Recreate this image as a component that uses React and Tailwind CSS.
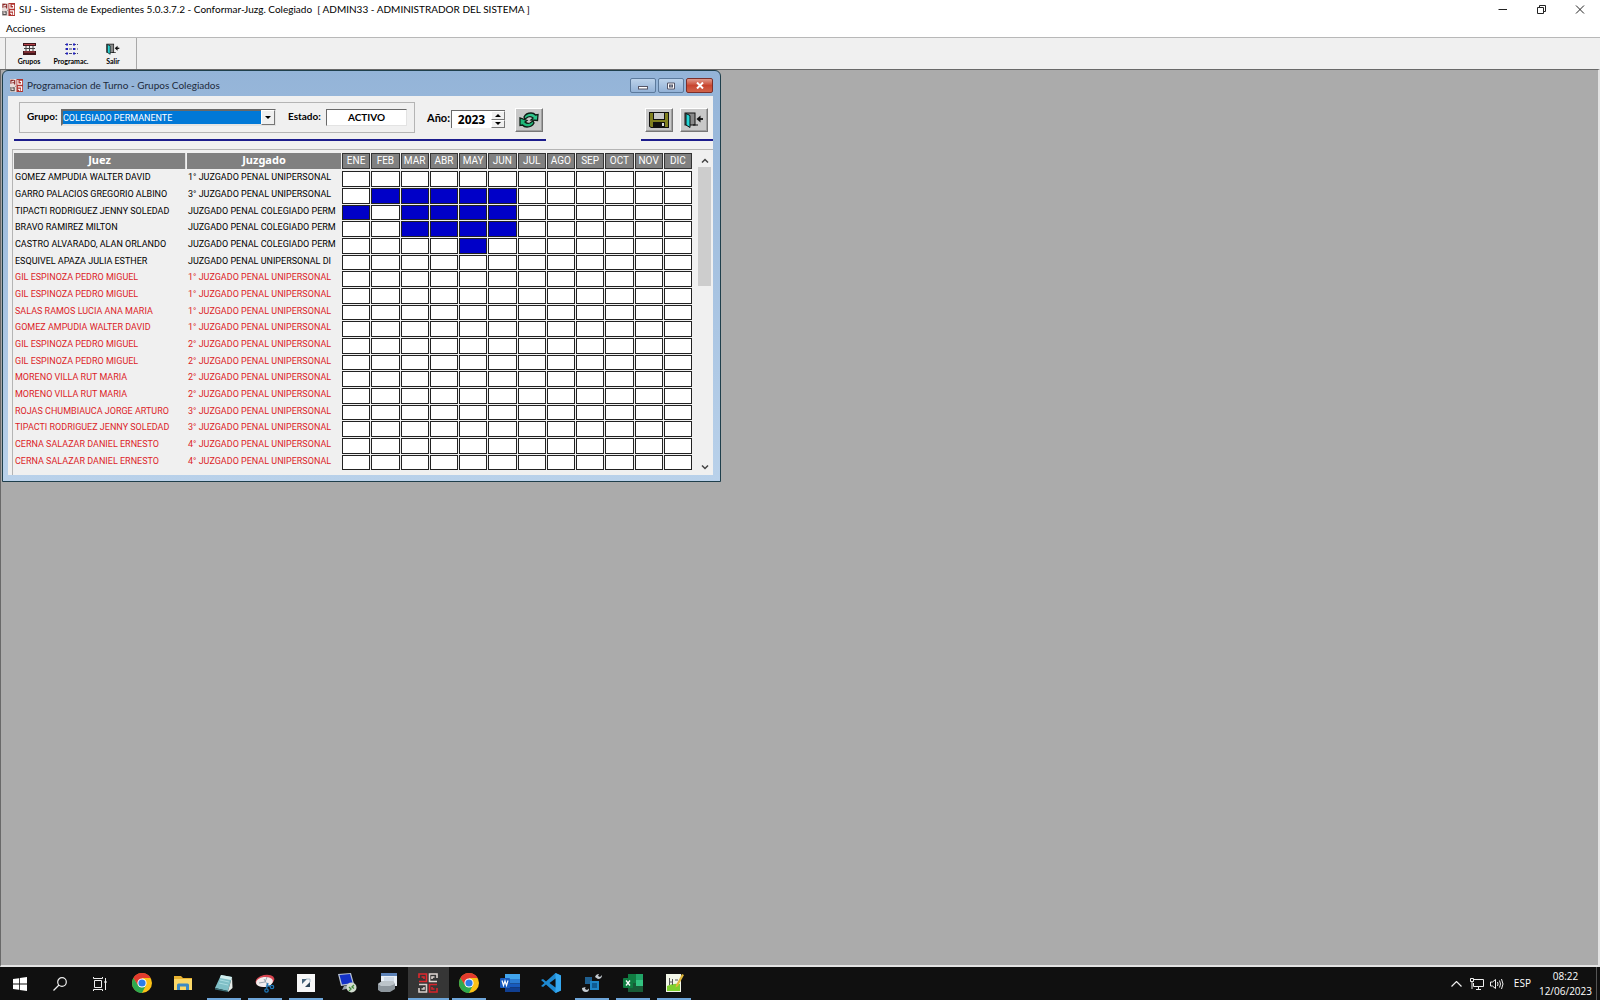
const MONTHS = ['ENE', 'FEB', 'MAR', 'ABR', 'MAY', 'JUN', 'JUL', 'AGO', 'SEP', 'OCT', 'NOV', 'DIC'];
const UNI = ' JUZGADO PENAL UNIPERSONAL';
const ROWS = [
  ['GOMEZ AMPUDIA WALTER DAVID', '1°' + UNI, []],
  ['GARRO PALACIOS GREGORIO ALBINO', '3°' + UNI, [1, 2, 3, 4, 5]],
  ['TIPACTI RODRIGUEZ JENNY SOLEDAD', 'JUZGADO PENAL COLEGIADO PERM', [0, 2, 3, 4, 5]],
  ['BRAVO RAMIREZ MILTON', 'JUZGADO PENAL COLEGIADO PERM', [2, 3, 4, 5]],
  ['CASTRO ALVARADO, ALAN ORLANDO', 'JUZGADO PENAL COLEGIADO PERM', [4]],
  ['ESQUIVEL APAZA JULIA ESTHER', 'JUZGADO PENAL UNIPERSONAL DI', []],
  ['GIL ESPINOZA PEDRO MIGUEL', '1°' + UNI, []],
  ['GIL ESPINOZA PEDRO MIGUEL', '1°' + UNI, []],
  ['SALAS RAMOS LUCIA ANA MARIA', '1°' + UNI, []],
  ['GOMEZ AMPUDIA WALTER DAVID', '1°' + UNI, []],
  ['GIL ESPINOZA PEDRO MIGUEL', '2°' + UNI, []],
  ['GIL ESPINOZA PEDRO MIGUEL', '2°' + UNI, []],
  ['MORENO VILLA RUT MARIA', '2°' + UNI, []],
  ['MORENO VILLA RUT MARIA', '2°' + UNI, []],
  ['ROJAS CHUMBIAUCA JORGE ARTURO', '3°' + UNI, []],
  ['TIPACTI RODRIGUEZ JENNY SOLEDAD', '3°' + UNI, []],
  ['CERNA SALAZAR DANIEL ERNESTO', '4°' + UNI, []],
  ['CERNA SALAZAR DANIEL ERNESTO', '4°' + UNI, []],
];

function SijIcon({ className }) {
  return (
    <svg viewBox="0 0 14 14" className={className}>
      <rect width="14" height="14" fill="#e9dcda" />
      <rect x="7" y="0" width="7" height="14" fill="#b03530" />
      <path d="M1 5V1.500H4M2.500 4H5V1M5 4V6" stroke="#8c2a2a" strokeWidth="1.200" fill="none" />
      <path d="M1 8.500V12.500H4.500V9.500H2.500M5.500 8H6" stroke="#555" strokeWidth="1.200" fill="none" />
      <path d="M8.500 1V5.500H12.500V2.500H10.500M8.500 8.500H12.500V13M8.500 11H10.500V13" stroke="#fff" strokeWidth="1.200" fill="none" />
    </svg>
  );
}

function SijTaskIcon() {
  const arm = 'M1 5V1H8.500V8.500H1M3.500 4H6V6';
  return (
    <svg viewBox="0 0 20 20" className="size-5" strokeWidth="1.600" fill="none">
      <path d={arm} stroke="#e0282e" />
      <path d={arm} stroke="#e0d6d2" transform="translate(20 0) scale(-1 1)" />
      <path d={arm} stroke="#d8cfcb" transform="translate(0 20) scale(1 -1)" />
      <path d={arm} stroke="#d6232b" transform="translate(20 20) scale(-1 -1)" />
    </svg>
  );
}

function DoorIcon({ className }) {
  return (
    <svg viewBox="0 0 20 16" className={className}>
      <rect x="1" y="1" width="10" height="12" fill="#8a8a8a" stroke="#111" />
      <path d="M2 1.500L6 3.500V15.500L2 13Z" fill="#25d5d5" stroke="#111" />
      <path d="M9 13H14" stroke="#111" />
      <path d="M14 7H19" stroke="#111" strokeWidth="1.800" />
      <path d="M12.500 7L16.500 3.500V10.500Z" fill="#111" />
    </svg>
  );
}

function ChromeIcon() {
  return (
    <svg viewBox="0 0 20 20" className="size-5">
      <circle cx="10" cy="10" r="10" fill="#fbc116" />
      <path d="M10 10L1.340 5A10 10 0 0 1 18.660 5H10Z" fill="#e33b2e" />
      <path d="M1.340 5L5.700 12.500L10 10L10 5Z" fill="#e33b2e" />
      <path d="M1.340 5A10 10 0 0 0 10 20L13.900 12.300L10 14.300A4.600 4.600 0 0 1 5.900 12.200Z" fill="#2da94f" />
      <circle cx="10" cy="10" r="4.600" fill="#fff" />
      <circle cx="10" cy="10" r="3.600" fill="#2b7de9" />
    </svg>
  );
}

const TASKS = [
  { name: 'Google Chrome', icon: <ChromeIcon /> },
  {
    name: 'Explorador de archivos',
    icon: (
      <svg viewBox="0 0 20 20" className="size-5">
        <path d="M1 3H8L10 5H19V17H1Z" fill="#e8b230" />
        <path d="M1 6H19V17H1Z" fill="#fbd868" />
        <path d="M4 17V12Q4 10.500 5.500 10.500H14.500Q16 10.500 16 12V17H13V13.500H7V17Z" fill="#3c8ac4" />
      </svg>
    ),
  },
  {
    name: 'Bloc de notas', open: true,
    icon: (
      <svg viewBox="0 0 20 20" className="size-5">
        <path d="M7 2L18 4L14 18L1 15Z" fill="#7fbfc6" />
        <path d="M7 2L18 4L17 7L6 5Z" fill="#d3eeee" />
        <path d="M18 4L18.500 15L14 19L14 18Z" fill="#e4ebe8" />
        <path d="M1 15L14 18V19L1 16.500Z" fill="#3b6f78" />
        <path d="M6 7L15 9M5 10L14 12" stroke="#a9dbe0" strokeWidth="1" />
      </svg>
    ),
  },
  {
    name: 'Recortes', open: true,
    icon: (
      <svg viewBox="0 0 20 20" className="size-5">
        <ellipse cx="10" cy="7.500" rx="9.500" ry="5.500" fill="#d64550" transform="rotate(-12 10 7.500)" />
        <ellipse cx="9.500" cy="9" rx="8.500" ry="5" fill="#f4eeee" transform="rotate(-8 9.500 9)" />
        <path d="M4 10L10 9L12 4M9 6L13 13" stroke="#9aa6b0" strokeWidth="1" fill="none" />
        <circle cx="11.500" cy="17.500" r="1.700" fill="none" stroke="#1f78b8" strokeWidth="1.300" />
        <circle cx="17" cy="14" r="1.700" fill="none" stroke="#1f78b8" strokeWidth="1.300" />
        <path d="M11.500 15.500L13 10M15 13.500L11 12" stroke="#1f78b8" strokeWidth="1.300" />
      </svg>
    ),
  },
  {
    name: 'Escritorio remoto', open: true,
    icon: (
      <svg viewBox="0 0 20 20" className="size-5">
        <rect x="1" y="1" width="18" height="18" fill="#f7f7f7" />
        <path d="M6 6H11L6 11Z" fill="#47657c" />
        <path d="M14 14H9L14 9Z" fill="#2c4356" />
        <path d="M10 6H14V9" stroke="#a8bdcb" fill="none" />
      </svg>
    ),
  },
  {
    name: 'Conexión a escritorio remoto',
    icon: (
      <svg viewBox="0 0 20 20" className="size-5">
        <path d="M1 1L14 0L17 11L4 13Z" fill="#b7c3d4" />
        <path d="M2.500 2L13 1L15.500 10L5 11.500Z" fill="#1432c8" />
        <path d="M7 13L12 12L13 15L5 17Z" fill="#98a3ab" />
        <circle cx="14.500" cy="14.500" r="5" fill="#d2dccf" />
        <path d="M12 14L14 16L12 18M17 12L15 14L17 15.500" stroke="#438b3c" strokeWidth="1.300" fill="none" />
      </svg>
    ),
  },
  {
    name: 'Impresora',
    icon: (
      <svg viewBox="0 0 20 20" className="size-5">
        <rect x="3" y="0" width="16" height="13" fill="#eaf0f7" />
        <rect x="3" y="0" width="16" height="3" fill="#5c82b8" />
        <path d="M6 5H16M6 7H16" stroke="#b9c7d8" />
        <path d="M0 11L4 8H15L17 11V16L12 19H3L0 17Z" fill="#8d969d" />
        <path d="M0 11L4 8H15L17 11L12 13H3Z" fill="#bcc4ca" />
      </svg>
    ),
  },
  { name: 'SIJ', icon: <SijTaskIcon />, open: true, active: true },
  { name: 'Google Chrome', icon: <ChromeIcon />, open: true },
  {
    name: 'Word',
    icon: (
      <svg viewBox="0 0 20 20" className="size-5">
        <rect x="5" y="1" width="15" height="5" fill="#41a5ee" />
        <rect x="5" y="6" width="15" height="4.500" fill="#2b7cd3" />
        <rect x="5" y="10.500" width="15" height="4" fill="#185abd" />
        <rect x="5" y="14.500" width="15" height="4.500" fill="#103f91" />
        <rect x="0" y="5" width="10" height="10" rx="1" fill="#185abd" />
        <path d="M2 7.500L3.500 12.500L5 8L6.500 12.500L8 7.500" stroke="#fff" strokeWidth="1.200" fill="none" />
      </svg>
    ),
  },
  {
    name: 'Visual Studio Code',
    icon: (
      <svg viewBox="0 0 20 20" className="size-5">
        <path d="M14.500 0L20 2.500V17.500L14.500 20L5 11.500L2 14L0 13L3.500 10L0 7L2 6L5 8.500Z" fill="#1e8ad2" />
        <path d="M14.500 0L20 2.500V17.500L14.500 20Z" fill="#35a8f0" />
        <path d="M14.500 5.500V14.500L8.500 10Z" fill="#101010" />
      </svg>
    ),
  },
  {
    name: 'Herramienta de datos', open: true,
    icon: (
      <svg viewBox="0 0 20 20" className="size-5">
        <rect x="3" y="4" width="7" height="7" fill="#1f5f8f" />
        <rect x="8" y="8" width="9" height="9" fill="#1d86c8" />
        <rect x="10" y="10" width="5" height="5" fill="#0f5b92" />
        <path d="M13 4Q14 1 17 1L16 3L18 4L20 2Q20 6 16 6" fill="#c5ccd2" />
        <path d="M0 15Q0 19 4 19Q7 19 7 15.500L5 17L3 16L3.500 14Z" fill="#c5ccd2" />
      </svg>
    ),
  },
  {
    name: 'Excel', open: true,
    icon: (
      <svg viewBox="0 0 20 20" className="size-5">
        <rect x="5" y="1" width="15" height="18" fill="#21a366" />
        <rect x="5" y="1" width="8" height="9" fill="#107c41" />
        <rect x="5" y="10" width="15" height="9" fill="#185c37" />
        <rect x="13" y="7" width="7" height="6" fill="#33c481" />
        <rect x="0" y="5" width="10" height="10" rx="1" fill="#107c41" />
        <path d="M3 7.500L7 12.500M7 7.500L3 12.500" stroke="#fff" strokeWidth="1.300" />
      </svg>
    ),
  },
  {
    name: 'Notepad++', open: true,
    icon: (
      <svg viewBox="0 0 20 20" className="size-5">
        <path d="M2 1H17V19H2Z" fill="#f2f6e8" />
        <path d="M3 13Q9 10 16 11V18H3Z" fill="#7fcf2f" />
        <path d="M5.500 5V12M5.500 9H8.500M8.500 6V12M11 7H14" stroke="#555" strokeWidth="1" />
        <path d="M12 12L18 1L20 2L14 13L11.500 14.500Z" fill="#e0b73c" />
      </svg>
    ),
  },
];

function ToolButton({ label, children }) {
  return (
    <button className="flex w-[42px] flex-col items-center text-[7px] leading-[9px] font-bold text-black">
      <span className="flex h-[15px] items-center">{children}</span>
      <span className="mt-px">{label}</span>
    </button>
  );
}

function RaisedButton({ label, children }) {
  return (
    <button
      aria-label={label}
      className="flex h-6 w-7 items-center justify-center border border-t-white border-r-[#777] border-b-[#777] border-l-white bg-[#c8c8c8] shadow-[inset_-1px_-1px_0_#a0a0a0]"
    >
      {children}
    </button>
  );
}

function TitleBar() {
  return (
    <header className="flex h-[19px] items-center bg-white pl-[2px]">
      <SijIcon className="size-[13px]" />
      <h1 className="ml-1 text-[10px] whitespace-pre">
        SIJ - Sistema de Expedientes 5.0.3.7.2 - Conformar-Juzg. Colegiado{'  '}[ ADMIN33 - ADMINISTRADOR DEL SISTEMA ]
      </h1>
      <div className="ml-auto flex">
        <button aria-label="Minimizar" className="flex w-[38px] justify-center">
          <svg viewBox="0 0 10 10" className="size-[10px]"><path d="M0.500 4.500H9" stroke="#222" /></svg>
        </button>
        <button aria-label="Restaurar" className="flex w-[38px] justify-center">
          <svg viewBox="0 0 10 10" className="size-[10px]">
            <path d="M1.500 2.500H7.500V8.500H1.500ZM3.500 2V0.500H9.500V6.500H8" stroke="#222" fill="none" />
          </svg>
        </button>
        <button aria-label="Cerrar" className="flex w-[40px] justify-center">
          <svg viewBox="0 0 10 10" className="size-[10px]"><path d="M1 0.500L9 8.500M9 0.500L1 8.500" stroke="#222" /></svg>
        </button>
      </div>
    </header>
  );
}

function Toolbar() {
  return (
    <div className="flex h-8 border-t border-[#b8b8b8] bg-[#f0f0f0]">
      <div className="ml-[5px] flex items-center border-r border-l border-r-[#a8a8a8] border-l-[#a8a8a8] pr-[2px] pl-[2px]">
        <ToolButton label="Grupos">
          <svg viewBox="0 0 13 12" className="h-3 w-[13px]">
            <path d="M0 0H13V3H0ZM0 8H13V12H0Z" fill="#40171b" />
            <path d="M1 1.500H12M1 9H12" stroke="#b8434a" />
            <path d="M3 3V8M6.500 3V8M10 3V8M1 5.500H12" stroke="#444" />
          </svg>
        </ToolButton>
        <ToolButton label="Programac.">
          <svg viewBox="0 0 13 12" className="h-3 w-[13px]">
            <path d="M0 1.500H13M0 6H13M0 10.500H13" stroke="#4a4a70" strokeDasharray="3 1" />
            <path d="M1 0.500H3V2.500H1ZM8 0.500H10V2.500H8ZM1 5H3V7H1ZM8 5H10V7H8ZM1 9.500H3V11.500H1ZM8 9.500H10V11.500H8Z" fill="#2020c0" />
          </svg>
        </ToolButton>
        <ToolButton label="Salir"><DoorIcon className="h-3 w-[14px]" /></ToolButton>
      </div>
    </div>
  );
}

function Filters() {
  return (
    <div className="flex justify-between pt-[6px] pl-[6px]">
      <div className="flex h-[39px] items-start border-b-2 border-[#1c1c8c]">
        <fieldset className="ml-[5px] flex h-[31px] w-[396px] items-start border border-[#b4b4b4] pt-[6px] pl-[7px]">
          <label htmlFor="grupo" className="w-[34px] text-[10px] leading-[14px] font-bold">Grupo:</label>
          <div className="relative flex w-[215px]">
            <select
              id="grupo"
              className="h-[17px] w-full appearance-none border-2 border-t-[#696969] border-r-[#e3e3e3] border-b-[#e3e3e3] border-l-[#696969] bg-[#0078d7] pr-4 font-['Roboto',sans-serif] text-[9px] leading-3 text-white"
            >
              <option>COLEGIADO PERMANENTE</option>
            </select>
            <span className="pointer-events-none absolute top-[1px] right-[1px] flex h-[15px] w-[14px] items-center justify-center border border-t-white border-r-[#777] border-b-[#777] border-l-white bg-[#f0f0f0]">
              <svg viewBox="0 0 6 3" className="h-[3px] w-[6px]"><path d="M0 0H6L3 3Z" fill="#000" /></svg>
            </span>
          </div>
          <label htmlFor="estado" className="ml-3 w-[38px] text-[10px] leading-[14px] font-bold">Estado:</label>
          <input
            id="estado"
            readOnly
            defaultValue="ACTIVO"
            className="h-[17px] w-[81px] border border-t-[#696969] border-r-[#e3e3e3] border-b-[#e3e3e3] border-l-[#696969] bg-white pb-[2px] text-center text-[10px] font-bold"
          />
        </fieldset>
        <label htmlFor="anio" className="ml-3 w-[24px] pt-2 text-[11px] leading-4 font-bold">Año:</label>
        <div className="mt-2 flex h-[18px] w-[54px] border-t border-l border-[#696969] bg-white">
          <input id="anio" defaultValue="2023" className="w-[39px] text-center font-['Open_Sans',sans-serif] text-[12px] font-bold" />
          <div className="flex w-[14px] flex-col">
            {['M0 3H6L3 0Z', 'M0 0H6L3 3Z'].map((d, i) => (
              <button
                key={d}
                aria-label={i ? 'Año anterior' : 'Año siguiente'}
                className="flex flex-1 items-center justify-center border border-t-white border-r-[#777] border-b-[#777] border-l-white bg-[#f0f0f0]"
              >
                <svg viewBox="0 0 6 3" className="h-[3px] w-[6px]"><path d={d} fill="#000" /></svg>
              </button>
            ))}
          </div>
        </div>
        <div className="mt-[6px] mr-[3px] ml-[10px]">
          <RaisedButton label="Actualizar">
            <svg viewBox="0 0 20 16" className="h-4 w-5">
              <path d="M5 5Q7 1 12 1Q15 1 16.500 3L19 2.500L18.500 8.500L12 8L14 6Q12 4 9 5L6 7Z" fill="#2fc48a" stroke="#0c1c14" strokeWidth="1.300" />
              <path d="M15 11Q13 15 8 15Q5 15 3.500 13L1 13.500L1 6L8 8.500L6 10Q8 12 11 11L14 9Z" fill="#1fb87a" stroke="#0c1c14" strokeWidth="1.300" />
            </svg>
          </RaisedButton>
        </div>
      </div>
      <div className="flex h-[39px] items-start gap-[7px] border-b-2 border-[#1c1c8c] pt-[6px] pr-[5px] pl-1">
        <RaisedButton label="Guardar">
          <svg viewBox="0 0 20 16" className="h-4 w-5">
            <path d="M0 0H20V16H2L0 14.500Z" fill="#111" />
            <path d="M1 1H4V8H16V1H19V15H16V10H4V15H2L1 14Z" fill="#808020" />
            <rect x="5" y="1" width="10" height="6" fill="#c8c8c8" />
            <rect x="13" y="11" width="2" height="3" fill="#ddd" />
          </svg>
        </RaisedButton>
        <RaisedButton label="Salir"><DoorIcon className="h-4 w-5" /></RaisedButton>
      </div>
    </div>
  );
}

function Schedule() {
  return (
    <div className="mt-2 ml-1 flex flex-1 border-t border-l border-[#b4b4b4]">
      <table className="mt-[2px] w-[680px] table-fixed border-separate border-spacing-px self-start font-['Roboto',sans-serif] text-[9px] leading-[13px]">
        <colgroup>
          <col className="w-[172px]" />
          <col className="w-[154px]" />
        </colgroup>
        <thead className="text-[11px] leading-[14px] text-white">
          <tr>
            <th className="p-0 pb-px"><div className="h-4 border-r border-[#ddd] bg-[#808080] font-['Noto_Sans']">Juez</div></th>
            <th className="p-0 pb-px"><div className="h-4 bg-[#808080] font-['Noto_Sans']">Juzgado</div></th>
            {MONTHS.map((m) => (
              <th key={m} className="p-0 pb-px font-normal">
                <div className="h-4 border border-[#333] bg-[#808080] text-[10px] leading-[13px]">{m}</div>
              </th>
            ))}
          </tr>
        </thead>
        <tbody>
          {ROWS.map(([juez, juzgado, on], i) => (
            <tr key={i} className={i > 5 ? 'h-4 text-[#dc1e28] nth-[3n]:h-[15px]' : 'h-4 text-black nth-[3n]:h-[15px]'}>
              <td className="overflow-hidden p-0 pl-px align-top whitespace-nowrap">{juez}</td>
              <td className="overflow-hidden p-0 pl-px align-top whitespace-nowrap">{juzgado}</td>
              {MONTHS.map((m, k) => (
                <td key={m} className={on.includes(k) ? 'border border-[#222] bg-[#0000c8] p-0' : 'border border-[#222] bg-white p-0'} />
              ))}
            </tr>
          ))}
        </tbody>
      </table>
      <div className="mt-[3px] ml-[5px] flex w-[13px] flex-col">
        <button aria-label="Subir" className="flex h-[14px] items-center justify-center">
          <svg viewBox="0 0 8 5" className="h-[5px] w-2"><path d="M1 4.500L4 1.500L7 4.500" stroke="#444" strokeWidth="1.500" fill="none" /></svg>
        </button>
        <div className="h-[119px] bg-[#cdcdcd]" />
        <button aria-label="Bajar" className="mt-auto flex h-[15px] items-center justify-center">
          <svg viewBox="0 0 8 5" className="h-[5px] w-2"><path d="M1 0.500L4 3.500L7 0.500" stroke="#444" strokeWidth="1.500" fill="none" /></svg>
        </button>
      </div>
    </div>
  );
}

function ChildWindow() {
  return (
    <section className="flex h-[412px] w-[719px] flex-col rounded-t-md border border-[#1f3f4c] bg-gradient-to-b from-[#94b4d8] to-[#b9d1ea] pr-[7px] pb-[6px] pl-[5px]">
      <div className="flex h-[25px] shrink-0 items-center pt-1">
        <SijIcon className="ml-[2px] size-[13px]" />
        <h2 className="ml-1 text-[10px] text-[#1c2a3c]">Programacion de Turno - Grupos Colegiados</h2>
        <div className="ml-auto flex gap-[2px]">
          <button aria-label="Minimizar" className="flex h-[15px] w-[26px] items-center justify-center rounded-xs border border-[#5c7a9c] bg-gradient-to-b from-[#bcd2ea] to-[#93b2d6]">
            <svg viewBox="0 0 10 8" className="h-2 w-[10px]"><rect x="0.500" y="4.500" width="9" height="2.500" fill="#fff" stroke="#556" /></svg>
          </button>
          <button aria-label="Maximizar" className="flex h-[15px] w-[26px] items-center justify-center rounded-xs border border-[#5c7a9c] bg-gradient-to-b from-[#bcd2ea] to-[#93b2d6]">
            <svg viewBox="0 0 10 8" className="h-2 w-[10px]"><path d="M1.500 1H8.500V7H1.500Z" fill="#fff" stroke="#556" /><rect x="3.500" y="3" width="3" height="2" fill="#9ab" stroke="#556" /></svg>
          </button>
          <button aria-label="Cerrar" className="flex h-[15px] w-[27px] items-center justify-center rounded-xs border border-[#7c2f2a] bg-gradient-to-b from-[#e09a8c] via-[#c8452f] to-[#d0634a]">
            <svg viewBox="0 0 8 7" className="h-[7px] w-2"><path d="M1 0.500L7 6.500M7 0.500L1 6.500" stroke="#fff" strokeWidth="2" /></svg>
          </button>
        </div>
      </div>
      <div className="flex flex-1 flex-col bg-[#f0f0f0]">
        <Filters />
        <Schedule />
      </div>
    </section>
  );
}

function Taskbar() {
  return (
    <footer className="flex h-[33px] shrink-0 bg-[#101010] font-['Open_Sans',sans-serif] text-[10px] text-white">
      <button aria-label="Inicio" className="flex w-10 items-center justify-center">
        <svg viewBox="0 0 14 14" className="size-[14px]">
          <path d="M0 2L6 1.200V6.600H0ZM6.800 1.100L14 0V6.600H6.800ZM0 7.400H6V12.800L0 12ZM6.800 7.400H14V14L6.800 12.900Z" fill="#fff" />
        </svg>
      </button>
      <button aria-label="Buscar" className="flex w-10 items-center justify-center">
        <svg viewBox="0 0 14 14" className="size-[14px]">
          <circle cx="9" cy="5" r="4.300" fill="none" stroke="#eee" strokeWidth="1.200" />
          <path d="M6 8L0.500 13.500" stroke="#eee" strokeWidth="1.300" />
        </svg>
      </button>
      <button aria-label="Vista de tareas" className="flex w-10 items-center justify-center">
        <svg viewBox="0 0 14 14" className="size-[14px]">
          <path d="M1.500 3.500H8.500V10.500H1.500ZM0.500 0V1.500H9.500V0M0.500 14V12.500H9.500V14M12.500 1V13" stroke="#eee" fill="none" />
          <rect x="11.500" y="4" width="2" height="2" fill="#eee" />
        </svg>
      </button>
      <div className="ml-[2px] grid w-[572px] grid-cols-14">
        {TASKS.map((t, i) => (
          <button
            key={i}
            aria-label={t.name}
            className={t.active ? 'flex flex-col items-center bg-[#363636]' : 'flex flex-col items-center'}
          >
            <span className="flex flex-1 items-center">{t.icon}</span>
            <span className={t.active ? 'h-[2px] w-full bg-[#6ea6da]' : t.open ? 'h-[2px] w-[34px] bg-[#6ea6da]' : 'h-[2px]'} />
          </button>
        ))}
      </div>
      <div className="ml-auto flex items-center">
        <button aria-label="Mostrar iconos ocultos" className="mr-2">
          <svg viewBox="0 0 11 6" className="h-[6px] w-[11px]"><path d="M0.500 5.500L5.500 0.500L10.500 5.500" stroke="#eee" strokeWidth="1.200" fill="none" /></svg>
        </button>
        <button aria-label="Red" className="mr-[6px]">
          <svg viewBox="0 0 14 12" className="h-3 w-[14px]">
            <path d="M4 1.500H13.500V8.500H3.500V5M6 11.500H11M8.500 8.500V11.500" stroke="#eee" fill="none" />
            <path d="M0.500 0.500H3.500V3.500H0.500ZM2 4V11" stroke="#eee" fill="none" />
          </svg>
        </button>
        <button aria-label="Volumen" className="mr-[10px]">
          <svg viewBox="0 0 14 12" className="h-3 w-[14px]">
            <path d="M0.500 4H2.500L5.500 1.500V10.500L2.500 8H0.500ZM7.500 4Q8.500 6 7.500 8M9.500 2.500Q11.500 6 9.500 9.500M11.500 1Q14.500 6 11.500 11" stroke="#eee" fill="none" />
          </svg>
        </button>
        <button className="mr-2">ESP</button>
        <time className="text-center leading-[15px]">08:22<br />12/06/2023</time>
        <div className="ml-1 h-[33px] w-1 border-l border-[#555]" />
      </div>
    </footer>
  );
}

export default function App() {
  return (
    <div className="flex h-screen flex-col bg-[#f0f0f0] font-['Lato','Open_Sans',sans-serif] text-black">
      <TitleBar />
      <nav className="flex h-[18px] items-center bg-white pl-[6px] text-[10px]">
        <button>Acciones</button>
      </nav>
      <Toolbar />
      <main className="flex-1 overflow-hidden border-t border-r-2 border-b-2 border-l border-t-[#696969] border-r-[#e3e3e3] border-b-[#e3e3e3] border-l-[#696969] bg-[#ababab] pl-px">
        <ChildWindow />
      </main>
      <Taskbar />
    </div>
  );
}
